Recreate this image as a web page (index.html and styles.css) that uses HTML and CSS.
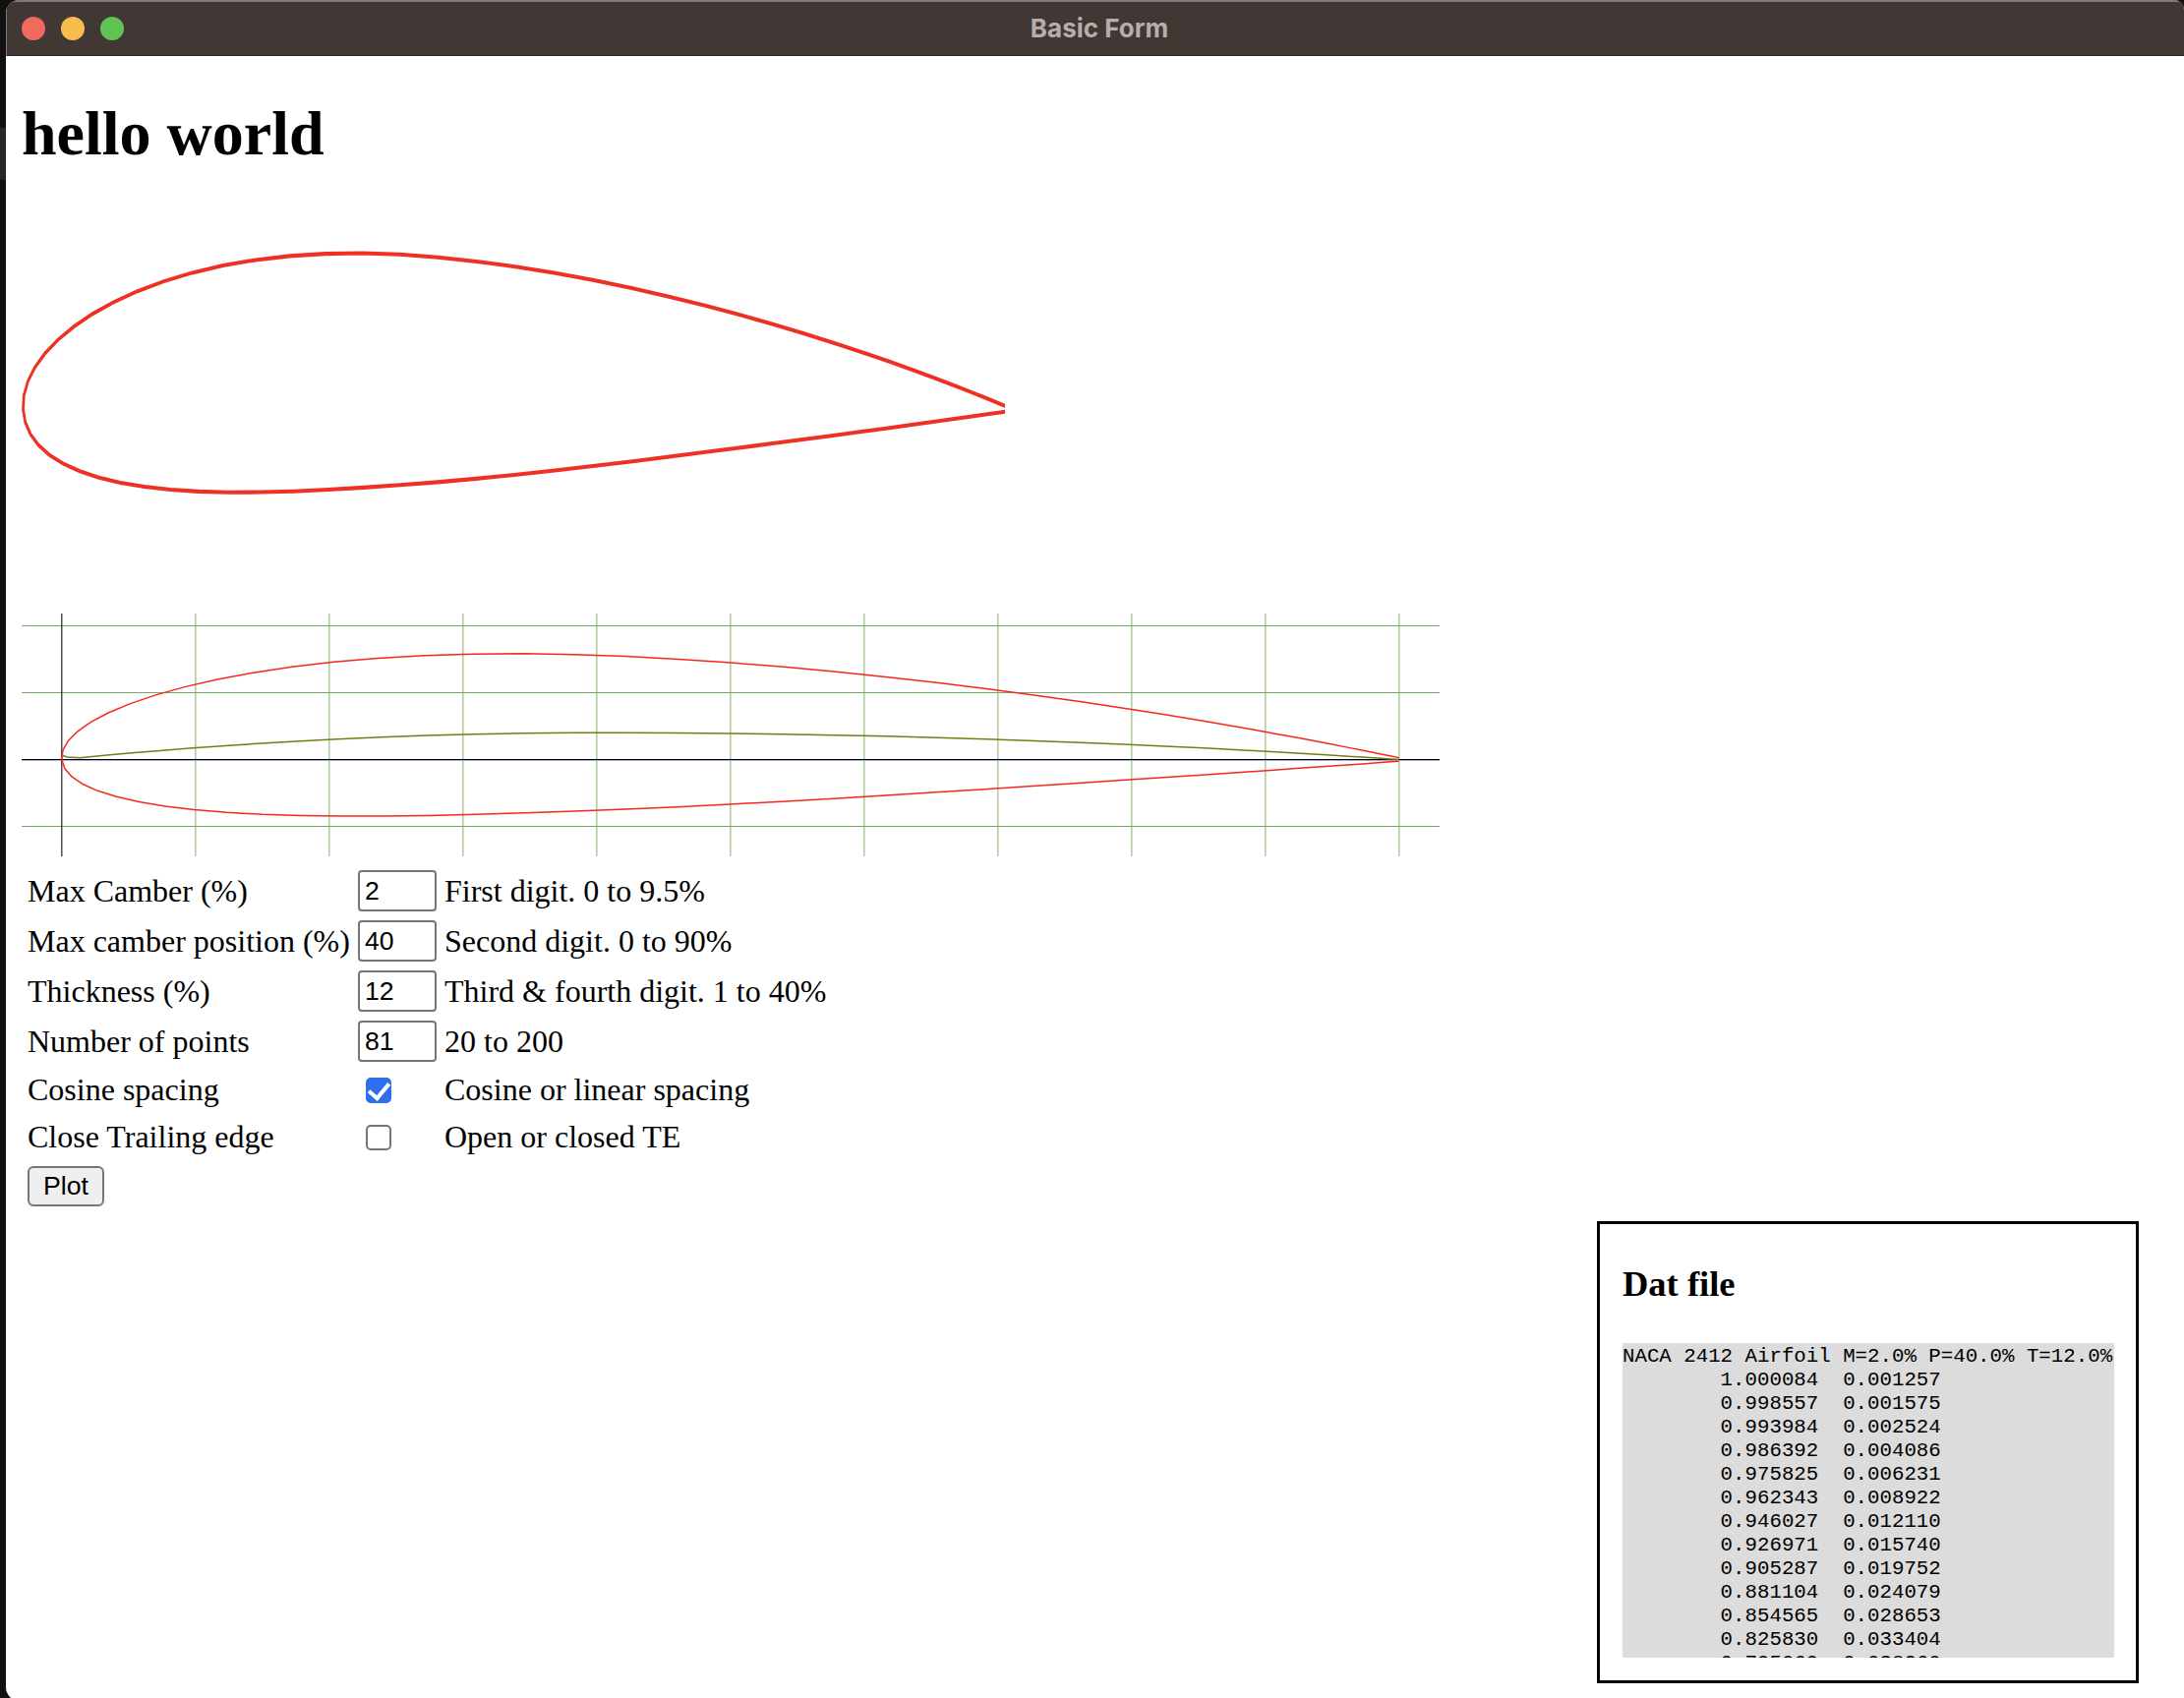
FILE: index.html
```html
<!doctype html>
<html>
<head>
    <meta charset="UTF-8">
    <title>Basic Form</title>
    <link rel="stylesheet" href="styles.css">
</head>
<body>
<div class="window">
    <div class="titlebar">
        <div class="lights">
            <span class="light red"></span>
            <span class="light yellow"></span>
            <span class="light green"></span>
        </div>
        <div class="title">Basic Form</div>
    </div>
    <div class="content">
        <h1>hello world</h1>
        <svg id="shape" class="shape" width="1000" height="300"></svg>
        <svg id="plot" class="plot" width="1442" height="247"></svg>
        <form class="params">
            <label>Max Camber (%)</label>
            <input type="text" value="2">
            <span>First digit. 0 to 9.5%</span>
            <label>Max camber position (%)</label>
            <input type="text" value="40">
            <span>Second digit. 0 to 90%</span>
            <label>Thickness (%)</label>
            <input type="text" value="12">
            <span>Third &amp; fourth digit. 1 to 40%</span>
            <label>Number of points</label>
            <input type="text" value="81">
            <span>20 to 200</span>
            <label class="check-row">Cosine spacing</label>
            <input type="checkbox" checked>
            <span class="check-row">Cosine or linear spacing</span>
            <label class="check-row">Close Trailing edge</label>
            <input type="checkbox">
            <span class="check-row">Open or closed TE</span>
            <button type="button">Plot</button>
        </form>
        <div class="dat">
            <h3>Dat file</h3>
            <pre id="datfile"></pre>
        </div>
    </div>
</div>
<script src="script.js"></script>
</body>
</html>
```

FILE: styles.css
```css
* {
    box-sizing: border-box;
}

html, body {
    height: 100%;
}

body {
    margin: 0;
    background: linear-gradient(#111 130px, #26272b 130px, #26272b 183px, #111 183px);
    overflow: hidden;
    font-family: "Liberation Serif", serif;
}

.window {
    height: calc(100% + 3px);
    margin-left: 6px;
    background: #fff;
    border-radius: 14px 10px 0 14px;
    overflow: hidden;
}

.titlebar {
    height: 57px;
    display: flex;
    align-items: center;
    position: relative;
    background: #413836;
    border-top: 2px solid #7f7a77;
    border-left: 1px solid #7f7a77;
    border-bottom: 1px solid #2a2727;
}

.lights {
    display: flex;
    gap: 16px;
    padding-left: 15px;
}

.light {
    width: 24px;
    height: 24px;
    border-radius: 50%;
}

.red { background: #f16a5f; }
.yellow { background: #f5be4f; }
.green { background: #5fc454; }

.title {
    position: absolute;
    left: 0;
    right: 0;
    padding: 0 0 2px 8px;
    text-align: center;
    font: bold 26px Inter, "Liberation Sans", sans-serif;
    color: #b5afac;
}

.content {
    display: flex;
    flex-direction: column;
    padding-left: 16px;
}

h1 {
    margin: 0;
    padding-top: 42px;
    font-size: 64px;
    line-height: 74px;
    font-weight: bold;
}

.shape {
    display: block;
    margin-top: 51px;
}

.plot {
    display: block;
    margin-top: 100px;
}

.params {
    display: grid;
    grid-template-columns: 336px 88px auto;
    justify-content: start;
    align-items: center;
    row-gap: 9px;
    margin: 14px 0 0 6px;
    font-size: 32px;
}

.params input[type=text] {
    width: 80px;
    height: 42px;
    padding: 0 5px;
    border: 2px solid #767676;
    border-radius: 4px;
    font: 26.67px "Liberation Sans", sans-serif;
    color: #000;
}

.params input[type=checkbox] {
    appearance: none;
    position: relative;
    width: 26px;
    height: 26px;
    margin: 0 0 0 8px;
    background: #fff;
    border: 2.5px solid #767676;
    border-radius: 5px;
}

.params input[type=checkbox]:checked {
    background: #2f6fed;
    border-color: #2f6fed;
}

.params input[type=checkbox]:checked::after {
    content: "";
    position: absolute;
    left: 5px;
    top: -1px;
    width: 9px;
    height: 17px;
    border: solid #fff;
    border-width: 0 4px 4px 0;
    transform: rotate(40deg);
}

.check-row {
    line-height: 39px;
}

.params button {
    grid-column: 1;
    justify-self: start;
    width: 78px;
    height: 41px;
    margin-top: 1px;
    padding: 0;
    background: #efefef;
    border: 2px solid #767676;
    border-radius: 6px;
    font: 26.67px "Liberation Sans", sans-serif;
    color: #000;
}

.dat {
    align-self: flex-end;
    width: 551px;
    height: 470px;
    margin: 15px 46px 0 0;
    padding: 0 22px 0 23px;
    border: 3px solid #000;
}

.dat h3 {
    margin: 0;
    padding-top: 40px;
    font-size: 36.5px;
    line-height: 42px;
}

.dat pre {
    height: 320px;
    margin: 39px 0 0;
    padding-top: 2px;
    overflow: hidden;
    background: #dcdcdc;
    font: 20.75px/24px "Liberation Mono", monospace;
    color: #000;
}
```

FILE: script.js
```js
// NACA 4 digit section, same numbers as the form
var M = 0.02, P = 0.4, T = 0.12, N = 81;
var upper = [], lower = [], camber = [];

function thickness(x) {
    return T / 0.2 * (0.2969 * Math.sqrt(x) - 0.126 * x - 0.3516 * x * x + 0.2843 * x * x * x - 0.1015 * x * x * x * x);
}

(function () {
    var half = (N - 1) / 2;
    for (var i = half; i >= 0; i--) {
        var x = 0.5 * (1 - Math.cos(Math.PI * i / half));
        var yc, dy;
        if (x < P) {
            yc = M / (P * P) * (2 * P * x - x * x);
            dy = 2 * M / (P * P) * (P - x);
        } else {
            yc = M / ((1 - P) * (1 - P)) * (1 - 2 * P + 2 * P * x - x * x);
            dy = 2 * M / ((1 - P) * (1 - P)) * (P - x);
        }
        var th = Math.atan(dy);
        var yt = thickness(x);
        upper.unshift([x - yt * Math.sin(th), yc + yt * Math.cos(th)]);
        lower.unshift([x + yt * Math.sin(th), yc - yt * Math.cos(th)]);
        camber.unshift([x, yc]);
    }
})();

var SVGNS = "http://www.w3.org/2000/svg";

function add(svg, tag, attrs) {
    var el = document.createElementNS(SVGNS, tag);
    for (var k in attrs) {
        el.setAttribute(k, attrs[k]);
    }
    svg.appendChild(el);
    return el;
}

function line(pts, ox, oy, sx, sy) {
    return pts.map(function (p) {
        return (ox + p[0] * sx).toFixed(2) + "," + (oy - p[1] * sy).toFixed(2);
    }).join(" ");
}

// top drawing: outline stretched, cut at the right side of the svg
var shape = document.getElementById("shape");
var outline = upper.slice().reverse().concat(lower.slice(1));
var g = add(shape, "g", { transform: "scale(1,1.5)" });
add(g, "polyline", {
    points: line(outline, 1.5, 192 / 1.5, 1000, 2000 / 1.5),
    fill: "none",
    stroke: "#ee3124",
    "stroke-width": 2.7
});

// grid plot
var plot = document.getElementById("plot");
var X0 = 40.8, Y0 = 148.5, SC = 1360;
for (var j = 1; j <= 10; j++) {
    add(plot, "line", { x1: X0 + j * 136, x2: X0 + j * 136, y1: 0, y2: 247, stroke: "#b3cfa9", "stroke-width": 1.7 });
}
[-136, -68, 68].forEach(function (d) {
    add(plot, "line", { x1: 0, x2: 1442, y1: Y0 + d, y2: Y0 + d, stroke: "#74a968", "stroke-width": 1 });
});
add(plot, "line", { x1: 0, x2: 1442, y1: Y0 + 1, y2: Y0 + 1, stroke: "#a9a9d8", "stroke-width": 1 });
add(plot, "line", { x1: 0, x2: 1442, y1: Y0, y2: Y0, stroke: "#000", "stroke-width": 1 });
add(plot, "line", { x1: X0, x2: X0, y1: 0, y2: 247, stroke: "#222", "stroke-width": 1.2 });
add(plot, "polyline", { points: line(upper, X0, Y0, SC, SC), fill: "none", stroke: "#f5281e", "stroke-width": 1.5 });
add(plot, "polyline", { points: line(lower, X0, Y0, SC, SC), fill: "none", stroke: "#f5281e", "stroke-width": 1.5 });
// the mean line starts with a small hook at the nose
var mean = [[0.0004, 0.0031], [0.004, 0.0018]].concat(camber.filter(function (p) {
    return p[0] > 0.01;
}));
add(plot, "polyline", { points: line(mean, X0, Y0, SC, SC), fill: "none", stroke: "#7a7a18", "stroke-width": 1.5 });

// dat file text, only the lines that fit the box
function num(v) {
    var s = v.toFixed(6);
    while (s.length < 9) {
        s = " " + s;
    }
    return s;
}
var text = "NACA 2412 Airfoil M=2.0% P=40.0% T=12.0%\n";
outline.slice(0, 13).forEach(function (p) {
    text += "       " + num(p[0]) + " " + num(p[1]) + "\n";
});
document.getElementById("datfile").textContent = text;
```
